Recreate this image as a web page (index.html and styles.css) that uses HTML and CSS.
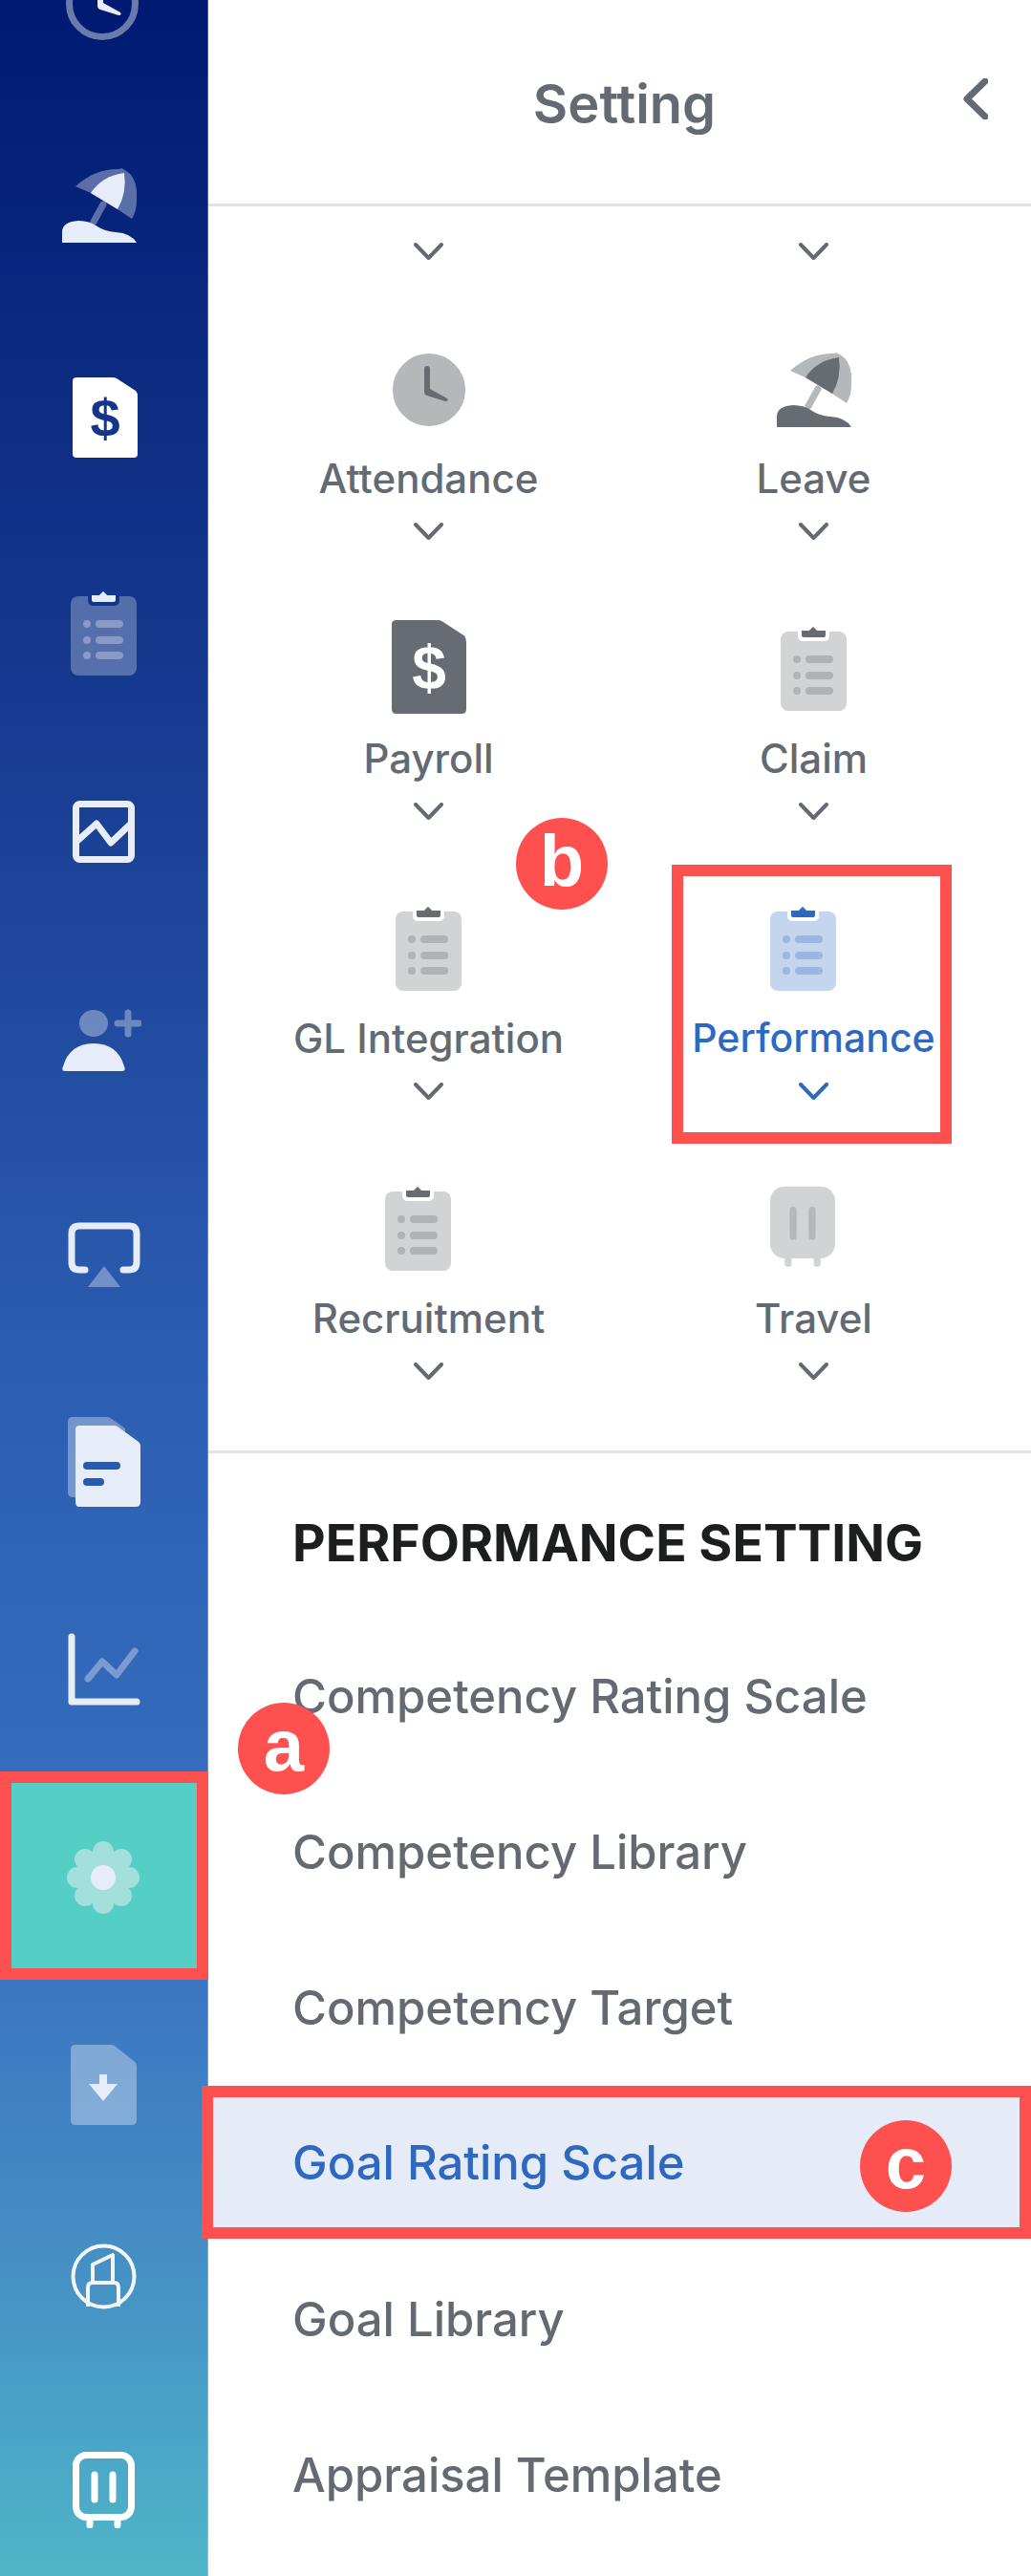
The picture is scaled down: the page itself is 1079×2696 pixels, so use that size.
FILE: index.html
```html
<!DOCTYPE html>
<html>
<head>
<meta charset="UTF-8">
<title>Setting</title>
<link rel="stylesheet" href="styles.css">
</head>
<body>
<svg class="defs" xmlns="http://www.w3.org/2000/svg">
	<symbol id="clock" viewBox="0 0 76 76">
		<circle class="clock-ring" cx="38" cy="38" r="34.500"/>
		<path class="clock-hand" d="M33 16Q33 13 36 13Q39 13 39 16V37L57 47Q59 50 55 50L36 44Q33 43 33 40Z"/>
	</symbol>
	<symbol id="umbrella" viewBox="0 0 78 78">
		<path class="soft" d="M14 19Q35 0 60 1L62 0L66 2Q80 10 78 34Q78 45 73 53L58 43L30 26Z"/>
		<path class="solid" d="M30 26Q42 8 65 5Q68 26 58 43Z"/>
		<path class="soft-line" d="M43 38L33 56"/>
		<path class="solid" d="M0 78V66Q1 56 17 55Q29 55 37 61Q44 66 56 67Q72 68 78 78Z"/>
	</symbol>
	<symbol id="dollar" viewBox="0 0 68 84">
		<path class="solid" d="M4 0H42Q44 0 46 1L66 14Q68 16 68 20V80Q68 84 64 84H4Q0 84 0 80V4Q0 0 4 0Z"/>
	</symbol>
	<symbol id="clipboard" viewBox="0 0 69 93">
		<rect class="board" x="0" y="10" width="69" height="83" rx="8"/>
		<path class="clip" d="M20 7H29L34 2L39 7H49V14Q49 18 45 18H24Q20 18 20 14Z"/>
		<circle class="board-line" cx="17" cy="39" r="4"/>
		<circle class="board-line" cx="17" cy="56" r="4"/>
		<circle class="board-line" cx="17" cy="72" r="4"/>
		<rect class="board-line" x="26" y="35" width="29" height="8" rx="4"/>
		<rect class="board-line" x="26" y="52" width="29" height="8" rx="4"/>
		<rect class="board-line" x="26" y="68" width="29" height="8" rx="4"/>
	</symbol>
	<symbol id="picture" viewBox="0 0 65 65">
		<rect class="solid-line" x="3.500" y="3.500" width="58" height="58" rx="4"/>
		<path class="solid-line" d="M5 42L25 24L40 44L60 25"/>
	</symbol>
	<symbol id="person" viewBox="0 0 83 65">
		<ellipse class="soft" cx="33" cy="15" rx="15" ry="14"/>
		<path class="soft-line" d="M58 15H80M69 4V26"/>
		<path class="solid" d="M3 65Q-1 65 1 60Q8 36 33 36Q58 36 65 60Q67 65 63 65Z"/>
	</symbol>
	<symbol id="airplay" viewBox="0 0 76 68">
		<path class="solid-line" d="M18 50H12Q4 50 4 42V12Q4 4 12 4H64Q72 4 72 12V42Q72 50 64 50H58"/>
		<path class="soft" d="M38 46L55 68H21Z"/>
	</symbol>
	<symbol id="docs" viewBox="0 0 76 94">
		<path class="soft" d="M5 0H40Q44 0 46 2L60 12V84H5Q0 84 0 79V5Q0 0 5 0Z"/>
		<path class="solid" d="M12 9H48Q50 9 52 10L74 26Q76 28 76 30V89Q76 94 71 94H12Q8 94 8 89V13Q8 9 12 9Z"/>
		<rect class="gap-fill" x="16" y="47" width="39" height="8" rx="4"/>
		<rect class="gap-fill" x="16" y="64" width="22" height="8" rx="4"/>
	</symbol>
	<symbol id="linechart" viewBox="0 0 76 76">
		<path class="soft-line" d="M21 48L36 30L51 44L70 19"/>
		<path class="solid-line" d="M4 4V72H72"/>
	</symbol>
	<symbol id="gear" viewBox="0 0 76 76">
		<g class="soft">
			<circle cx="38" cy="38" r="28"/>
			<circle cx="38" cy="11" r="11"/>
			<circle cx="38" cy="65" r="11"/>
			<circle cx="11" cy="38" r="11"/>
			<circle cx="65" cy="38" r="11"/>
			<circle cx="19" cy="19" r="11"/>
			<circle cx="57" cy="19" r="11"/>
			<circle cx="19" cy="57" r="11"/>
			<circle cx="57" cy="57" r="11"/>
		</g>
		<circle class="solid" cx="38" cy="38" r="13"/>
	</symbol>
	<symbol id="download" viewBox="0 0 69 84">
		<path class="soft" d="M5 0H42Q45 0 47 2L66 17Q69 19 69 22V79Q69 84 64 84H5Q0 84 0 79V5Q0 0 5 0Z"/>
		<path class="solid" d="M30 31H38V41H49L34 59L19 41H30Z"/>
	</symbol>
	<symbol id="lipstick" viewBox="0 0 69 69">
		<circle class="thin-line" cx="34.500" cy="34.500" r="32"/>
		<path class="thin-line" d="M18 66V46Q18 41 23 41H45Q50 41 50 46V66M23 41V22L44 12V41"/>
	</symbol>
	<symbol id="suitcase" viewBox="0 0 65 80">
		<rect class="case-body" x="3.500" y="3.500" width="58" height="65" rx="11"/>
		<path class="case-bar" d="M23 24V50M42 24V50"/>
		<path class="case-wheel" d="M18 72V77M47 72V77"/>
	</symbol>
</svg>

<div class="app">
	<nav class="sidebar">
		<div class="nav-item"><svg viewBox="0 0 218 218"><use href="#clock" x="69" y="74" width="76" height="76"/></svg></div>
		<div class="nav-item"><svg viewBox="0 0 218 218"><use href="#umbrella" x="65" y="66" width="78" height="78"/></svg></div>
		<div class="nav-item"><svg viewBox="0 0 218 218"><use href="#dollar" x="76" y="67" width="68" height="84"/><text class="dollar-sign" x="110" y="129">$</text></svg></div>
		<div class="nav-item"><svg viewBox="0 0 218 218"><use href="#clipboard" x="74" y="68" width="69" height="93"/></svg></div>
		<div class="nav-item"><svg viewBox="0 0 218 218"><use href="#picture" x="76" y="74" width="65" height="65"/></svg></div>
		<div class="nav-item"><svg viewBox="0 0 218 218"><use href="#person" x="65" y="74" width="83" height="65"/></svg></div>
		<div class="nav-item"><svg viewBox="0 0 218 218"><use href="#airplay" x="71" y="79" width="76" height="68"/></svg></div>
		<div class="nav-item"><svg viewBox="0 0 218 218"><use href="#docs" x="71" y="65" width="76" height="94"/></svg></div>
		<div class="nav-item"><svg viewBox="0 0 218 218"><use href="#linechart" x="71" y="73" width="76" height="76"/></svg></div>
		<div class="nav-item active"><svg viewBox="0 0 218 218"><use href="#gear" x="70" y="73" width="76" height="76"/></svg></div>
		<div class="nav-item"><svg viewBox="0 0 218 218"><use href="#download" x="74" y="68" width="69" height="84"/></svg></div>
		<div class="nav-item"><svg viewBox="0 0 218 218"><use href="#lipstick" x="74" y="58" width="69" height="69"/></svg></div>
		<div class="nav-item"><svg viewBox="0 0 218 218"><use href="#suitcase" x="76" y="58" width="65" height="80"/></svg></div>
	</nav>

	<main class="panel">
		<header class="panel-head">
			<h1>Setting</h1>
			<svg class="back" viewBox="0 0 26 43"><path d="M23 3L4 21.500L23 40"/></svg>
		</header>

		<section class="modules">
			<div class="tail"><svg class="chevron" viewBox="0 0 31 18"><path d="M2 2L15.500 16L29 2"/></svg></div>
			<div class="tail"><svg class="chevron" viewBox="0 0 31 18"><path d="M2 2L15.500 16L29 2"/></svg></div>

			<div class="module first">
				<div class="slot"><svg class="i-clock"><use href="#clock"/></svg></div>
				<span class="label">Attendance</span>
				<svg class="chevron" viewBox="0 0 31 18"><path d="M2 2L15.500 16L29 2"/></svg>
			</div>
			<div class="module first">
				<div class="slot"><svg class="i-umbrella"><use href="#umbrella"/></svg></div>
				<span class="label">Leave</span>
				<svg class="chevron" viewBox="0 0 31 18"><path d="M2 2L15.500 16L29 2"/></svg>
			</div>
			<div class="module">
				<div class="slot"><svg class="i-dollar" viewBox="0 0 68 84" preserveAspectRatio="none"><use href="#dollar"/><text class="dollar-sign" x="34" y="62">$</text></svg></div>
				<span class="label">Payroll</span>
				<svg class="chevron" viewBox="0 0 31 18"><path d="M2 2L15.500 16L29 2"/></svg>
			</div>
			<div class="module">
				<div class="slot"><svg class="i-clipboard"><use href="#clipboard"/></svg></div>
				<span class="label">Claim</span>
				<svg class="chevron" viewBox="0 0 31 18"><path d="M2 2L15.500 16L29 2"/></svg>
			</div>
			<div class="module">
				<div class="slot"><svg class="i-clipboard"><use href="#clipboard"/></svg></div>
				<span class="label">GL Integration</span>
				<svg class="chevron" viewBox="0 0 31 18"><path d="M2 2L15.500 16L29 2"/></svg>
			</div>
			<div class="module selected">
				<div class="slot shift"><svg class="i-clipboard"><use href="#clipboard"/></svg></div>
				<span class="label">Performance</span>
				<svg class="chevron" viewBox="0 0 31 18"><path d="M2 2L15.500 16L29 2"/></svg>
				<div class="mark"></div>
			</div>
			<div class="module">
				<div class="slot shift"><svg class="i-clipboard"><use href="#clipboard"/></svg></div>
				<span class="label">Recruitment</span>
				<svg class="chevron" viewBox="0 0 31 18"><path d="M2 2L15.500 16L29 2"/></svg>
			</div>
			<div class="module">
				<div class="slot shift"><svg class="i-suitcase"><use href="#suitcase"/></svg></div>
				<span class="label">Travel</span>
				<svg class="chevron" viewBox="0 0 31 18"><path d="M2 2L15.500 16L29 2"/></svg>
			</div>
		</section>

		<section class="settings">
			<h2>PERFORMANCE SETTING</h2>
			<ul class="setting-list">
				<li>Competency Rating Scale</li>
				<li>Competency Library</li>
				<li>Competency Target</li>
				<li class="current">Goal Rating Scale</li>
				<li>Goal Library</li>
				<li>Appraisal Template</li>
			</ul>
		</section>
	</main>

	<div class="badge badge-a">a</div>
	<div class="badge badge-b">b</div>
	<div class="badge badge-c">c</div>
</div>
</body>
</html>
```

FILE: styles.css
```css
* {
	margin: 0;
	padding: 0;
	box-sizing: border-box;
}
html, body {
	width: 1079px;
	height: 2696px;
	overflow: hidden;
	background: #fff;
}
body {
	font-family: "Inter", "Liberation Sans", sans-serif;
	color: #636a71;
}
.defs {
	position: absolute;
	width: 0;
	height: 0;
}
.app {
	position: relative;
	display: flex;
	width: 1079px;
	height: 2696px;
	overflow: hidden;
}

/* icon parts, coloured per context with the variables below */
.solid { fill: var(--solid); }
.soft { fill: var(--soft); }
.gap-fill { fill: var(--gap); }
.soft-line { fill: none; stroke: var(--soft); stroke-width: 7; stroke-linecap: round; stroke-linejoin: round; }
.solid-line { fill: none; stroke: var(--solid); stroke-width: 7; stroke-linecap: round; stroke-linejoin: round; }
.thin-line { fill: none; stroke: #f3f5f9; stroke-width: 4; stroke-linejoin: round; }
.clock-ring { fill: var(--ring-fill); stroke: var(--ring); stroke-width: 7; }
.clock-hand { fill: var(--hand); }
.dollar-sign {
	fill: var(--sign);
	font-family: "Liberation Sans", sans-serif;
	font-weight: 700;
	font-size: 56px;
	text-anchor: middle;
}
.board { fill: var(--board); }
.board-line { fill: var(--board-line); }
.clip { fill: var(--clip); stroke: var(--gap); stroke-width: 4; }
.case-body { fill: var(--case-fill); stroke: var(--case-line); stroke-width: 7; }
.case-bar { fill: none; stroke: var(--case-bar); stroke-width: 7; stroke-linecap: round; }
.case-wheel { fill: none; stroke: var(--case-line); stroke-width: 7; stroke-linecap: round; }

/* sidebar */
.sidebar {
	flex: none;
	width: 218px;
	height: 2696px;
	background: linear-gradient(180deg, #001a72 0%, #163a8f 27%, #2b5cb0 52%, #3a73c1 76%, #4590c5 88%, #4fb5c8 100%);
	border-right: 1px solid rgba(255, 255, 255, 0.3);
	--solid: #e7edf8;
	--soft: rgba(255, 255, 255, 0.34);
	--gap: #2a5aae;
	--ring: rgba(255, 255, 255, 0.42);
	--ring-fill: none;
	--hand: #e7edf8;
	--sign: #14358a;
	--board: rgba(255, 255, 255, 0.28);
	--board-line: rgba(255, 255, 255, 0.3);
	--clip: #e7edf8;
	--case-fill: none;
	--case-line: #fff;
	--case-bar: #fff;
}
.nav-item {
	height: 218px;
	width: 218px;
}
.nav-item:first-child {
	margin-top: -108px;
}
.nav-item:nth-child(3) {
	--solid: #fff;
}
.nav-item:nth-child(4) {
	--gap: #14358f;
}
.nav-item svg {
	display: block;
	width: 218px;
	height: 218px;
}
.nav-item.active {
	background: #55cec6;
	box-shadow: inset 0 0 0 12px #ff5050;
	--soft: #a3e0dd;
}

/* right panel */
.panel {
	flex: 1;
	min-width: 0;
}
.panel-head {
	position: relative;
	height: 216px;
	border-bottom: 3px solid #e2e3e4;
	padding: 76px 0 0 10px;
	text-align: center;
}
.panel-head h1 {
	font-size: 56px;
	line-height: 66px;
	font-weight: 600;
}
.back {
	position: absolute;
	left: 790px;
	top: 82px;
	width: 26px;
	height: 43px;
}
.back path {
	fill: none;
	stroke: #636a71;
	stroke-width: 7;
	stroke-linecap: round;
	stroke-linejoin: round;
}

.modules {
	display: grid;
	grid-template-columns: 403px 403px;
	padding: 38px 26px 74px 29px;
	--solid: #666c72;
	--soft: #b5b8ba;
	--gap: #fff;
	--ring: #b5b8ba;
	--ring-fill: #b5b8ba;
	--hand: #666c72;
	--sign: #fff;
	--board: #d1d3d5;
	--board-line: #b0b3b6;
	--clip: #666c72;
	--case-fill: #d1d3d5;
	--case-line: #d1d3d5;
	--case-bar: #b5b7ba;
}
.tail {
	display: flex;
	justify-content: center;
	height: 18px;
}
.chevron {
	display: block;
	flex: none;
	width: 31px;
	height: 18px;
}
.chevron path {
	fill: none;
	stroke: #636a71;
	stroke-width: 4;
	stroke-linecap: round;
	stroke-linejoin: round;
}
.module {
	position: relative;
	display: flex;
	flex-direction: column;
	align-items: center;
	height: 293px;
}
.slot {
	display: flex;
	align-items: center;
	justify-content: center;
	width: 100%;
	height: 110px;
	margin-top: 78px;
}
.first .slot {
	padding-top: 6px;
}
.shift {
	padding-right: 23px;
}
.label {
	margin-top: 15px;
	height: 50px;
	font-size: 42px;
	line-height: 53px;
	font-weight: 500;
	white-space: nowrap;
}
.module .chevron {
	margin-top: 23px;
}
.i-clock { width: 76px; height: 76px; }
.i-umbrella { width: 78px; height: 78px; }
.i-dollar { width: 78px; height: 98px; }
.i-clipboard { width: 69px; height: 93px; }
.i-suitcase { width: 68px; height: 85px; }

.selected {
	color: #2f68bf;
	--board: #c5d5ee;
	--board-line: #9bb6e0;
	--clip: #2f68bf;
}
.selected .label {
	font-size: 41px;
}
.selected .chevron path {
	stroke: #2f68bf;
}
.mark {
	position: absolute;
	left: 53px;
	top: 47px;
	width: 293px;
	height: 292px;
	border: 12px solid #ff5050;
}

/* performance setting list */
.settings {
	border-top: 3px solid #e2e3e4;
}
.settings h2 {
	padding: 64px 0 48px 88px;
	font-size: 53.500px;
	line-height: 60px;
	font-weight: 700;
	color: #1d1e20;
	white-space: nowrap;
}
.setting-list {
	list-style: none;
}
.setting-list li {
	height: 163px;
	padding-left: 88px;
	font-size: 49px;
	line-height: 165px;
	font-weight: 500;
	white-space: nowrap;
}
.setting-list .current {
	position: relative;
	height: 160px;
	margin: 1px 0 2px -7px;
	padding-left: 95px;
	line-height: 162px;
	background: #e5ebf7;
	box-shadow: inset 0 0 0 12px #ff5050;
	color: #2f68bf;
}

/* annotation badges */
.badge {
	position: absolute;
	width: 96px;
	height: 96px;
	border-radius: 50%;
	background: #ff5050;
	color: #fff;
	font-family: "Liberation Sans", sans-serif;
	font-weight: 700;
	font-size: 76px;
	line-height: 90px;
	text-align: center;
}
.badge-a { left: 249px; top: 1782px; }
.badge-b { left: 540px; top: 856px; }
.badge-c { left: 900px; top: 2219px; }
```
